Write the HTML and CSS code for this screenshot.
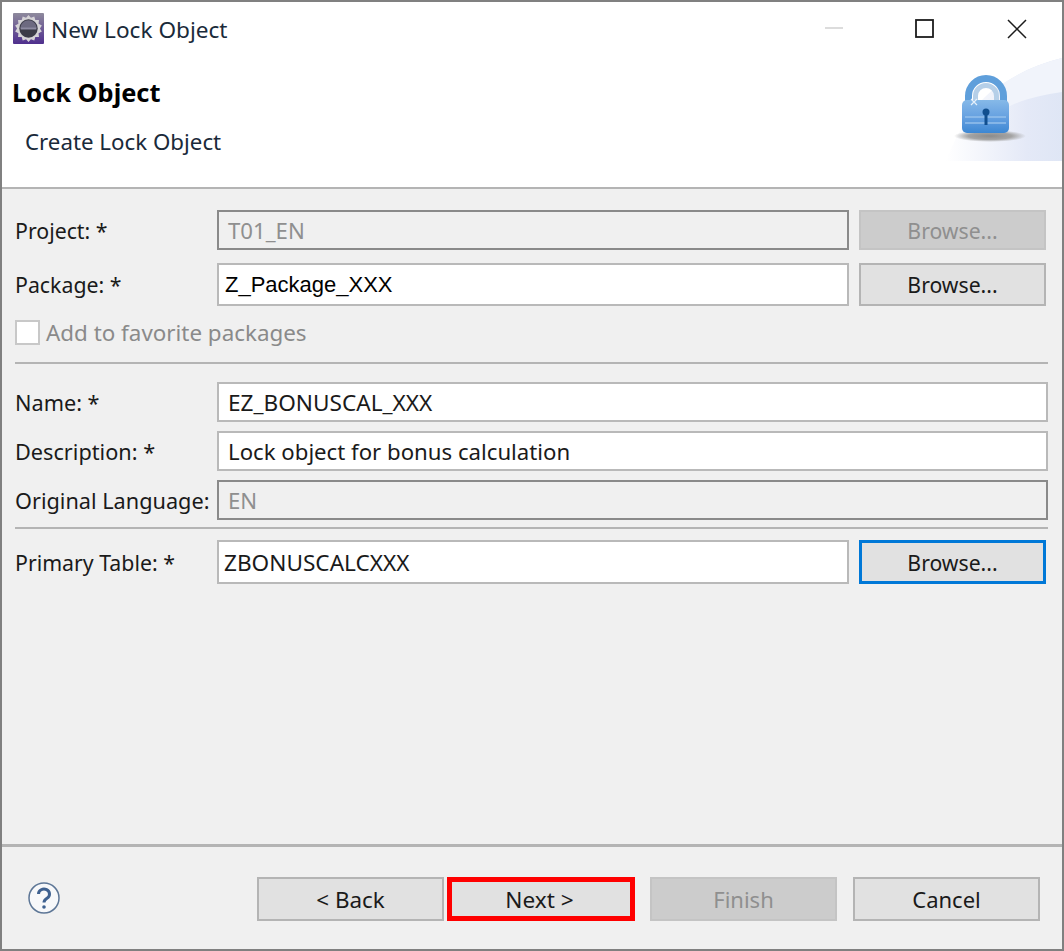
FILE: index.html
```html
<!DOCTYPE html>
<html>
<head>
<link rel="stylesheet" href="styles.css">
<title>New Lock Object</title>
</head>
<body>
<div class="window">
  <div class="titlebar">
    <svg class="app-icon" width="31" height="31" viewBox="0 0 32 32">
      <defs>
        <linearGradient id="appbg" x1="0" y1="0" x2="0" y2="1">
          <stop offset="0" stop-color="#8e8a9c"/>
          <stop offset="1" stop-color="#4f2f8e"/>
        </linearGradient>
      </defs>
      <rect width="32" height="32" rx="1" fill="url(#appbg)"/>
      <path d="M16 2l2.500 3 3.500-1.500 1 3.600 3.800.2-.4 3.800 3.400 1.700-2 3.200 2 3.200-3.400 1.700.4 3.800-3.800.2-1 3.600-3.500-1.500L16 30l-2.500-3-3.500 1.500-1-3.600-3.800-.2.4-3.800-3.400-1.700 2-3.200-2-3.200 3.400-1.700-.4-3.800 3.800-.2 1-3.600L13.500 5z" fill="#d5d3d6"/>
      <circle cx="16" cy="16" r="9.500" fill="#3c3c48"/>
      <path d="M7.500 16a8.500 8.500 0 0 1 17 0z" fill="#6d6a80"/>
      <rect x="8" y="15" width="16" height="2" fill="#8d8aa0"/>
    </svg>
    <span class="title-text">New Lock Object</span>
    <div class="window-controls">
      <svg width="20" height="20" viewBox="0 0 20 20"><path d="M2 9h18" stroke="#d0d0d0" stroke-width="1.500"/></svg>
      <svg width="20" height="20" viewBox="0 0 20 20"><rect x="1" y="1" width="17" height="17" fill="none" stroke="#1c1c1c" stroke-width="1.800"/></svg>
      <svg width="20" height="20" viewBox="0 0 20 20"><path d="M1 1l18 18M19 1L1 19" stroke="#1c1c1c" stroke-width="1.500"/></svg>
    </div>
  </div>

  <div class="banner">
    <div class="banner-text">
      <h1>Lock Object</h1>
      <p>Create Lock Object</p>
    </div>
    <svg class="banner-art" width="116" height="104" viewBox="0 0 116 104">
      <defs>
        <linearGradient id="wash" x1="0" y1="0" x2="1" y2="0">
          <stop offset="0" stop-color="#fff"/>
          <stop offset="0.700" stop-color="#e4e9f7"/>
          <stop offset="1" stop-color="#dfe6f5"/>
        </linearGradient>
        <linearGradient id="lockbody" x1="0" y1="0" x2="0" y2="1">
          <stop offset="0" stop-color="#86b9e8"/>
          <stop offset="0.550" stop-color="#649fe0"/>
          <stop offset="1" stop-color="#3c87d3"/>
        </linearGradient>
        <radialGradient id="shade">
          <stop offset="0" stop-color="#8b8b8b"/>
          <stop offset="0.600" stop-color="#a4a4a4"/>
          <stop offset="1" stop-color="#a4a4a4" stop-opacity="0"/>
        </radialGradient>
      </defs>
      <path d="M0 104C14 68 34 38 58 26C76 14 96 6 116 1v103z" fill="url(#wash)"/>
      <path d="M58 26C76 14 96 6 116 1v34C96 38 78 42 62 50z" fill="#f1f4fb"/>
      <ellipse cx="44" cy="79" rx="36" ry="6" fill="url(#shade)"/>
      <path d="M22.500 46V39a17.500 17.500 0 0 1 35 0v7" fill="none" stroke="#5f9fdb" stroke-width="7"/>
      <path d="M29.500 46V39a10.500 10.500 0 0 1 21 0v7" fill="none" stroke="#b5cfe8" stroke-width="5"/>
      <rect x="16" y="43" width="47" height="33" rx="5" fill="url(#lockbody)"/>
      <path d="M19 60h41M19 66h41" stroke="#94c0ec" stroke-width="1.500"/>
      <circle cx="40" cy="55" r="3.500" fill="#114f8f"/>
      <rect x="38.500" y="56" width="3" height="12" fill="#114f8f"/>
      <path d="M25 42l6 6M31 42l-6 6" stroke="#e6f0fa" stroke-width="1.200"/>
    </svg>
  </div>

  <div class="form">
    <div class="row row-project">
      <label>Project: *</label>
      <div class="field field-disabled">T01_EN</div>
      <div class="btn btn-disabled btn-browse">Browse...</div>
    </div>
    <div class="row row-package">
      <label>Package: *</label>
      <div class="field field-arial">Z_Package_XXX</div>
      <div class="btn btn-browse">Browse...</div>
    </div>
    <div class="check-row">
      <span class="checkbox"></span>
      <span class="check-label">Add to favorite packages</span>
    </div>
    <hr class="sep sep-first">
    <div class="row row-wide">
      <label>Name: *</label>
      <div class="field field-caps">EZ_BONUSCAL_XXX</div>
    </div>
    <div class="row row-wide">
      <label>Description: *</label>
      <div class="field">Lock object for bonus calculation</div>
    </div>
    <div class="row row-wide">
      <label>Original Language:</label>
      <div class="field field-disabled">EN</div>
    </div>
    <hr class="sep sep-second">
    <div class="row row-primary">
      <label>Primary Table: *</label>
      <div class="field field-caps field-tight">ZBONUSCALCXXX</div>
      <div class="btn btn-browse btn-focus">Browse...</div>
    </div>
  </div>

  <div class="footer">
    <svg class="help" width="34" height="34" viewBox="0 0 34 34">
      <circle cx="17" cy="17" r="15" fill="#f7f8fa" stroke="#5d7696" stroke-width="1.500"/>
      <path d="M11.500 13a5.500 5 0 1 1 8.500 4.200c-2 1.300-3 2.200-3 4.300" fill="none" stroke="#3f6190" stroke-width="3"/>
      <circle cx="17" cy="26" r="1.800" fill="#3f6190"/>
    </svg>
    <div class="actions">
      <div class="btn btn-action btn-back">&lt; Back</div>
      <div class="btn btn-action btn-marked">Next &gt;</div>
      <div class="btn btn-action btn-disabled">Finish</div>
      <div class="btn btn-action">Cancel</div>
    </div>
  </div>
</div>
</body>
</html>
```
FILE: styles.css
```css
* {
  box-sizing: border-box;
}
html, body {
  margin: 0;
  padding: 0;
}
body {
  width: 1064px;
  height: 951px;
  overflow: hidden;
  background: #fff;
  font-family: "Noto Sans", sans-serif;
  font-size: 22px;
  color: #1a1a1a;
}
.window {
  width: 1064px;
  height: 951px;
  border: 2px solid #808080;
  display: flex;
  flex-direction: column;
  background: #f0f0f0;
}

/* title bar + banner */
.titlebar {
  height: 56px;
  flex: none;
  background: #fff;
  display: flex;
  align-items: center;
  padding: 0 0 3px 11px;
}
.title-text {
  margin: 2px 0 0 7px;
  font-size: 22.6px;
  color: #1a2a3a;
}
.window-controls {
  margin-left: auto;
  display: flex;
  gap: 72px;
  padding-right: 35px;
}
.banner {
  height: 131px;
  flex: none;
  background: #fff;
  border-bottom: 2px solid #b4b4b4;
  display: flex;
  justify-content: space-between;
  align-items: flex-start;
}
.banner h1 {
  margin: 17px 0 0 10px;
  font-size: 25.4px;
  line-height: 34px;
  font-weight: 700;
  color: #000;
}
.banner p {
  margin: 17px 0 0 23px;
  font-size: 22.3px;
  line-height: 32px;
  color: #1a2a3a;
}
.banner-art {
  margin-top: -1px;
}

/* form */
.form {
  flex: 1;
  padding: 21px 14px 0 13px;
  border-bottom: 3px solid #b4b4b4;
}
.row {
  display: grid;
  grid-template-columns: 192px 632px 187px;
  column-gap: 10px;
  align-items: center;
  height: 40px;
}
.row label {
  font-size: 21.7px;
  white-space: nowrap;
}
.row-project label,
.row-package label,
.row-primary label {
  font-size: 21.3px;
}
.row-wide {
  grid-template-columns: 192px 1fr;
  margin-bottom: 9px;
}
.row-package {
  margin-top: 13px;
  height: 43px;
}
.row-primary {
  height: 44px;
}
.field {
  height: 100%;
  background: #fff;
  border: 2px solid #b9b9b9;
  padding: 0 10px 0 9px;
  display: flex;
  align-items: center;
  font-size: 22.2px;
  color: #1a1a1a;
  white-space: nowrap;
}
.field-disabled {
  background: #f0f0f0;
  border-color: #8a8a8a;
  color: #8f8f8f;
}
.field-caps {
  font-size: 22.6px;
}
.field-arial {
  font-family: "Liberation Sans", sans-serif;
  font-size: 22px;
  color: #000;
  padding-left: 6px;
}
.field-tight {
  padding-left: 5px;
}
.check-row {
  display: flex;
  align-items: center;
  margin-top: 13px;
  height: 26px;
  gap: 6px;
}
.checkbox {
  width: 25px;
  height: 25px;
  background: #fff;
  border: 2px solid #c8c8c8;
}
.check-label {
  font-size: 22.4px;
  color: #8a8a8a;
}
.sep {
  border: 0;
  border-top: 2px solid #b4b4b4;
  margin: 0;
}
.sep-first {
  margin-top: 17px;
  margin-bottom: 18px;
}
.sep-second {
  margin-top: -2px;
  margin-bottom: 11px;
}

/* buttons */
.btn {
  display: flex;
  align-items: center;
  justify-content: center;
  background: #e1e1e1;
  border: 2px solid #b4b4b4;
  height: 100%;
  white-space: nowrap;
}
.btn-browse {
  font-size: 21.2px;
}
.btn-disabled {
  background: #cccccc;
  border-color: #c4c4c4;
  color: #8f8f8f;
}
.btn-focus {
  border: 3px solid #0078d7;
}

/* footer */
.footer {
  height: 102px;
  flex: none;
  display: flex;
  align-items: center;
  padding: 0 22px 0 25px;
}
.help {
  flex: none;
}
.actions {
  margin-left: auto;
  display: flex;
  gap: 3px;
  margin-top: 2px;
}
.btn-action {
  width: 187px;
  height: 44px;
}
.btn-back {
  font-size: 22.4px;
}
.btn-marked {
  border: 5px solid #ff0000;
  width: 188px;
  margin-right: 12px;
  padding-right: 3px;
  font-size: 22.6px;
}
.btn-action.btn-disabled + .btn-action {
  margin-left: 13px;
}
```
